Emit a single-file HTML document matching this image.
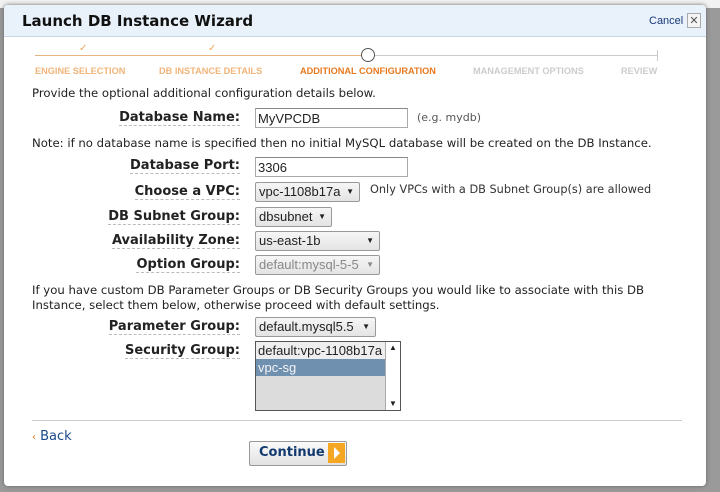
<!DOCTYPE html>
<html><head><style>
body{margin:0;width:720px;height:492px;background:#9a9a9a;position:relative;overflow:hidden;font-family:"DejaVu Sans",sans-serif;font-size:11.7px;color:#222}
.bgtop{position:absolute;left:0;top:0;width:720px;height:8px;background:#f2f2f2}
.dlg{position:absolute;left:4px;top:5px;width:702px;height:481px;background:#fff;border-radius:4px;box-shadow:0 0 4px #666;overflow:hidden}
.hdr{position:absolute;left:0;top:0;width:702px;height:31px;background:#e9f1fb;border-bottom:1px solid #c9d6e6}
.a{position:absolute;white-space:nowrap}
.lbl{position:absolute;font-weight:bold;font-size:13px;right:466px;border-bottom:1px dashed #bbb;line-height:15px}
.inp{position:absolute;border:1px solid #aaa;border-top-color:#888;background:#fff;font-family:"Liberation Sans",sans-serif;font-size:13px;padding-left:2px;height:20px;line-height:20px;box-sizing:border-box}
.sel{position:absolute;border:1px solid #999;border-radius:2px;background:linear-gradient(#f6f6f6,#e4e4e4);font-family:"Liberation Sans",sans-serif;font-size:13px;padding-left:3px;height:20px;line-height:18px;box-sizing:border-box}
.sel:after{content:"▼";position:absolute;right:5px;top:0;font-size:8px}
.step{position:absolute;top:61px;font-size:9.2px;font-weight:bold;font-family:"Liberation Sans",sans-serif}
</style></head><body>
<div class="bgtop"></div>
<div class="dlg">
<div class="hdr"></div>
<div class="a" style="left:18px;top:7px;font-size:15px;font-weight:bold;color:#111">Launch DB Instance Wizard</div>
<div class="a" style="left:645px;top:10px;font-size:11px;color:#1a3a7a;font-family:'Liberation Sans',sans-serif">Cancel</div>
<div class="a" style="left:683px;top:8px;width:12px;height:13px;border:1px solid #aaa;background:#f4f4f4;font-size:11px;line-height:13px;text-align:center;color:#555">✕</div>
<div class="a" style="left:31px;top:50px;width:334px;height:1px;background:#e8b382"></div>
<div class="a" style="left:365px;top:50px;width:288px;height:1px;background:#ccc"></div>
<div class="a" style="left:653px;top:45px;width:1px;height:11px;background:#ccc"></div>
<div class="a" style="left:357px;top:43px;width:12px;height:12px;border:1.5px solid #555;border-radius:50%;background:#fff"></div>
<div class="a" style="left:75px;top:38px;color:#f0a860;font-size:10px">✓</div>
<div class="a" style="left:204px;top:38px;color:#f0a860;font-size:10px">✓</div>
<div class="step" style="left:31px;color:#f2b47a">ENGINE SELECTION</div>
<div class="step" style="left:155px;color:#f2b47a">DB INSTANCE DETAILS</div>
<div class="step" style="left:296px;color:#e8791e">ADDITIONAL CONFIGURATION</div>
<div class="step" style="left:469px;color:#ccc">MANAGEMENT OPTIONS</div>
<div class="step" style="left:617px;color:#ccc">REVIEW</div>
<div class="a" style="left:28px;top:81px">Provide the optional additional configuration details below.</div>
<div class="lbl" style="top:105px">Database Name:</div>
<div class="inp" style="left:251px;top:103px;width:153px">MyVPCDB</div>
<div class="a" style="left:413px;top:106px;font-size:11px;color:#555">(e.g. mydb)</div>
<div class="a" style="left:28px;top:131px">Note: if no database name is specified then no initial MySQL database will be created on the DB Instance.</div>
<div class="lbl" style="top:153px">Database Port:</div>
<div class="inp" style="left:251px;top:152px;width:153px">3306</div>
<div class="lbl" style="top:179px">Choose a VPC:</div>
<div class="sel" style="left:251px;top:177px;width:105px">vpc-1108b17a</div>
<div class="a" style="left:366px;top:178px;font-size:11.3px;color:#333">Only VPCs with a DB Subnet Group(s) are allowed</div>
<div class="lbl" style="top:204px">DB Subnet Group:</div>
<div class="sel" style="left:251px;top:202px;width:77px">dbsubnet</div>
<div class="lbl" style="top:228px">Availability Zone:</div>
<div class="sel" style="left:251px;top:226px;width:125px">us-east-1b</div>
<div class="lbl" style="top:252px">Option Group:</div>
<div class="sel" style="left:251px;top:250px;width:125px;color:#888">default:mysql-5-5</div>
<div class="a" style="left:28px;top:278px;line-height:15px">If you have custom DB Parameter Groups or DB Security Groups you would like to associate with this DB<br>Instance, select them below, otherwise proceed with default settings.</div>
<div class="lbl" style="top:314px">Parameter Group:</div>
<div class="sel" style="left:251px;top:312px;width:121px">default.mysql5.5</div>
<div class="lbl" style="top:338px">Security Group:</div>
<div class="a" style="left:251px;top:336px;width:144px;height:68px;border:1px solid #555;background:#dcdcdc;font-family:'Liberation Sans',sans-serif;font-size:13px">
<div style="background:#eee;width:128px;height:17px;line-height:17px;padding-left:2px">default:vpc-1108b17a</div>
<div style="background:#7090b0;color:#f4f4f4;width:128px;height:17px;line-height:17px;padding-left:2px">vpc-sg</div>
<div style="position:absolute;right:0;top:0;width:14px;height:68px;background:#fff;border-left:1px solid #aaa;font-size:8px;text-align:center;line-height:12px">▲<div style="position:absolute;bottom:0;width:14px">▼</div></div>
</div>
<div class="a" style="left:28px;top:415px;width:650px;height:1px;background:#ccc"></div>
<div class="a" style="left:28px;top:424px;font-size:13px;color:#1a4a8a"><span style="color:#e8791e;font-size:10px">‹</span> Back</div>
<div class="a" style="left:245px;top:436px;width:96px;height:23px;border:1px solid #999;border-radius:2px;background:linear-gradient(#fafafa,#e2e2e2)"></div>
<div class="a" style="left:255px;top:440px;font-weight:bold;font-size:13px;color:#123a70">Continue</div>
<div class="a" style="left:324px;top:438px;width:17px;height:20px;background:#f5a623"><div style="margin:4px 0 0 6px;width:0;height:0;border-left:6px solid #fff;border-top:6px solid transparent;border-bottom:6px solid transparent"></div></div>
</div>
</body></html>
